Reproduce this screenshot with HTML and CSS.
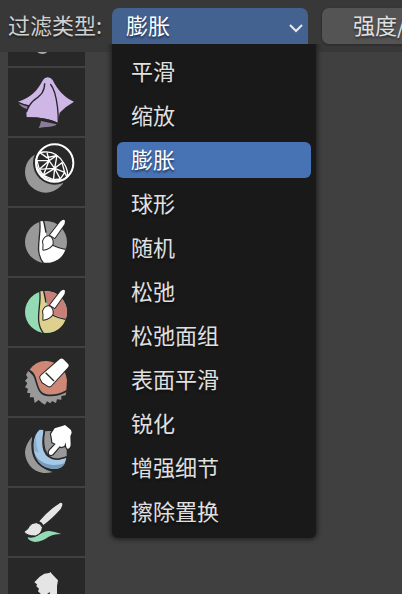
FILE: index.html
```html
<!DOCTYPE html>
<html lang="zh-CN">
<head>
<meta charset="utf-8">
<meta name="viewport" content="width=device-width, initial-scale=1">
<title>过滤类型</title>
<link rel="stylesheet" href="styles.css">
</head>
<body>
<header class="topbar">
  <label class="topbar-label" for="filter-type">过滤类型:</label>
  <div class="dropdown">
    <select class="dropdown-select" id="filter-type">
      <option>平滑</option>
      <option>缩放</option>
      <option selected>膨胀</option>
      <option>球形</option>
      <option>随机</option>
      <option>松弛</option>
      <option>松弛面组</option>
      <option>表面平滑</option>
      <option>锐化</option>
      <option>增强细节</option>
      <option>擦除置换</option>
    </select>
    <svg class="dropdown-arrow" viewBox="0 0 14 10" aria-hidden="true"><path d="M1 2 L7 8 L13 2"/></svg>
    <ul class="menu">
      <li><button class="menu-item" type="button">平滑</button></li>
      <li><button class="menu-item" type="button">缩放</button></li>
      <li><button class="menu-item is-active" type="button">膨胀</button></li>
      <li><button class="menu-item" type="button">球形</button></li>
      <li><button class="menu-item" type="button">随机</button></li>
      <li><button class="menu-item" type="button">松弛</button></li>
      <li><button class="menu-item" type="button">松弛面组</button></li>
      <li><button class="menu-item" type="button">表面平滑</button></li>
      <li><button class="menu-item" type="button">锐化</button></li>
      <li><button class="menu-item" type="button">增强细节</button></li>
      <li><button class="menu-item" type="button">擦除置换</button></li>
    </ul>
  </div>
  <button class="strength" type="button">强度/</button>
</header>
<main class="viewport">
  <nav class="tools">
    <button class="tool" type="button">
      <svg viewBox="24 -6 231 204" aria-hidden="true"><path fill="#aaa" d="M110 150l32-1-2 8q-4 5-12 5-10 0-18-7z"/></svg>
    </button>
    <button class="tool" type="button">
      <svg viewBox="24 24 231 204" aria-hidden="true">
        <path fill="#8b7c9a" d="M54 128l29 11-2 8q-15-3-27-19zM123 183l47 10q-4 6-20 7-22 1-34 4 5-8 7-21z"/>
        <path fill="#ceb6e6" d="M54 125C94 112 112 92 129 60Q134 52 143 52T158 60C170 86 194 114 222 125Q200 137 179 158L173 189Q146 172 80 172L79 157L87 137Q70 133 54 125z"/>
        <path class="ink" d="M134 70C134 100 118 108 100 122Q87 134 79 157M151 72Q158 80 164 98C171 122 175 145 175 190M79 174Q140 173 174 191M54 127Q72 135 88 138"/>
      </svg>
    </button>
    <button class="tool" type="button">
      <svg viewBox="24 9 231 204" aria-hidden="true">
        <circle cx="137" cy="111" r="62" fill="#999"/>
        <circle cx="164" cy="84" r="65" fill="#282828"/>
        <g class="mesh">
          <path d="M108 77Q111 50 132 51 171 47 193 87 206 107 201 127 175 147 141 130 108 112 108 77z"/>
          <path d="M111 77l36 0 17 23-46 3 29-26 24-16-30 7-20-14M147 77l-6-25M147 77l-17 44M164 100l-4 38M164 100l22-17 8 29zM171 61l-7 39M118 103l-7-26M118 103l12 18 34-21 17 32 13-20 7 15M130 121l30 13 21-2"/>
        </g>
        <circle cx="164" cy="84" r="56" fill="none" stroke="#fff" stroke-width="6"/>
      </svg>
    </button>
    <button class="tool" type="button">
      <svg viewBox="24 9 231 204" aria-hidden="true">
        <circle cx="138" cy="111" r="63" fill="#999"/>
        <path fill="#fff" d="M118 49L131 49C137 76 137 105 158 118Q170 128 196 132C188 163 157 178 128 171C99 135 126 100 118 49z"/>
        <path class="ink" d="M119 48C126 90 101 138 130 174M131 48Q135 66 138 83M157 120Q172 128 197 133"/>
        <g class="brush">
          <path d="M182 49Q190 41 195 47 196 56 188 65L164 99 150 90z"/>
          <path d="M130 134Q132 121 129 109 134 94 146 94 160 99 158 117 151 131 130 134z"/>
        </g>
      </svg>
    </button>
    <button class="tool" type="button">
      <svg viewBox="24 9 231 204" aria-hidden="true">
        <circle cx="138" cy="111" r="63" fill="#94dab5"/>
        <path fill="#c87f77" d="M131 49A63 63 0 0 1 197 133L150 115z"/>
        <path fill="#dfd08f" d="M118 49L131 49C137 76 137 105 158 118Q170 128 196 132C188 163 157 178 128 171C99 135 126 100 118 49z"/>
        <path class="ink" d="M119 48C126 90 101 138 130 174M131 48Q135 66 138 83M157 120Q172 128 197 133"/>
        <g class="brush">
          <path d="M182 49Q190 41 195 47 196 56 188 65L164 99 150 90z"/>
          <path d="M130 134Q132 121 129 109 134 94 146 94 160 99 158 117 151 131 130 134z"/>
        </g>
      </svg>
    </button>
    <button class="tool" type="button">
      <svg viewBox="24 9 231 204" aria-hidden="true">
        <path fill="#999" d="M85 77L78 89 83 98 75 107 82 115 75 127 84 131 81 143 91 145 89 157 101 157 104 174 116 165 125 173 135 179 141 169 151 175 156 168 168 174 171 163 184 164 184 153 197 151 199 140 150 145z"/>
        <path fill="#cf8876" d="M88 75Q108 46 141 48 194 54 201 106L199 136Q173 151 143 149 120 143 112 112 104 85 88 75z"/>
        <path class="ink ink-wide" d="M84 75C118 83 100 150 144 151Q174 153 199 139"/>
        <g class="brush">
          <path d="M121 100Q119 95 124 91L180 42Q185 38 190 43L205 58Q208 62 204 67L153 122Q148 126 143 122L127 112z"/>
          <path class="ink" d="M137 83L162 108"/>
        </g>
      </svg>
    </button>
    <button class="tool" type="button">
      <svg viewBox="24 9 231 204" aria-hidden="true">
        <path fill="#999" d="M97 65C87 118 104 155 158 171 111 185 76 151 75 111 77 83 97 65 97 65z"/>
        <path fill="#999" d="M135 49Q184 41 200 91L200 124Q175 137 153 126 126 108 135 49z"/>
        <path fill="#a4c8e5" d="M119 44L130 45Q132 58 129 75C127 112 148 139 180 133L199 128Q196 151 177 160C133 170 96 140 101 85Q103 57 119 44z"/>
        <path fill="#769bbd" d="M101 107Q113 146 159 150 181 151 196 143 186 164 155 162 108 153 101 107z"/>
        <path fill="#769bbd" opacity=".55" d="M102 83L108 62Q107 86 116 113L101 107z"/>
        <path class="ink" d="M133 48Q125 84 132 106 144 136 177 132L200 126M99 63Q91 112 114 143 132 162 159 165"/>
        <path class="hand" d="M153 57L164 40 187 33 195 30 213 45 215 53 211 64 212 90Q210 101 203 101 198 101 197 82L193 93 184 96 179 94 158 118Q152 122 147 117 145 111 149 106L167 87 157 82 156 72z"/>
      </svg>
    </button>
    <button class="tool" type="button">
      <svg viewBox="24 9 231 204" aria-hidden="true">
        <path fill="#94dab5" d="M83 157Q98 161 112 152 134 137 148 138 163 139 184 147 159 147 145 156 127 169 105 171 85 168 83 157z"/>
        <path fill="#e5e5e5" stroke="#282828" stroke-width="3" d="M72 140Q85 133 88 124 94 113 109 113 123 115 127 127 126 146 106 153 80 153 72 140z"/>
        <path fill="#e5e5e5" d="M118 109Q144 77 177 56 183 51 187 56 188 62 182 72 154 103 130 120 127 113 118 109z"/>
      </svg>
    </button>
    <button class="tool" type="button">
      <svg viewBox="24 219 231 204" aria-hidden="true"><path fill="#e5e5e5" d="M103 292L119 275 133 266 148 264 151 261 156 267 174 286 171 303 171 345 151 345 149 321 139 329 128 345 119 345 122 326 114 319 117 311 109 304 111 298z"/></svg>
    </button>
  </nav>
</main>
</body>
</html>
```
FILE: styles.css
```css
* {
  box-sizing: border-box;
}

body {
  display: flex;
  flex-direction: column;
  height: 100vh;
  margin: 0;
  overflow: hidden;
  background: #404040;
  color: #e0e0e0;
  font: 22px/32px "Noto Sans CJK SC", "Noto Sans", sans-serif;
}

button,
select {
  margin: 0;
  border: 0;
  color: inherit;
  font: inherit;
}

.topbar {
  position: relative;
  z-index: 1;
  display: flex;
  flex: none;
  align-items: flex-start;
  padding: 8px 0 8px 8px;
  background: #383838;
  white-space: nowrap;
}

.topbar-label {
  flex: none;
  width: 104px;
  color: #d0d0d0;
  text-shadow: 0 2px 2px #202020;
}

.dropdown {
  position: relative;
  flex: none;
  width: 196px;
}

.dropdown-select {
  display: block;
  width: 100%;
  height: 36px;
  padding: 0 14px 4px;
  border-radius: 7px 7px 0 0;
  background: #446290;
  color: #fff;
  text-shadow: 0 2px 2px #203050;
  appearance: none;
}

.dropdown-arrow {
  position: absolute;
  top: 15px;
  right: 5px;
  width: 14px;
  height: 10px;
  fill: none;
  stroke: #e8e8e8;
  stroke-width: 2;
  pointer-events: none;
}

.menu {
  position: absolute;
  top: 100%;
  left: 0;
  display: grid;
  gap: 8px;
  width: 204px;
  margin: 0;
  padding: 10px 5px 8px;
  border-radius: 0 0 6px 6px;
  background: #191919;
  box-shadow: 0 0 4px 2px #242424;
  list-style: none;
  clip-path: inset(0 -8px -8px -8px);
}

.menu-item {
  display: block;
  width: 100%;
  height: 36px;
  padding: 0 14px 4px;
  border-radius: 6px;
  background: none;
  text-align: left;
  text-shadow: 0 2px 2px #101010;
}

.menu-item.is-active {
  background: #4772b3;
  color: #fff;
  text-shadow: 0 2px 2px #203860;
}

.strength {
  flex: 1;
  min-width: 0;
  height: 36px;
  margin-left: 14px;
  padding: 0 0 4px 31px;
  overflow: hidden;
  border-radius: 7px 0 0 7px;
  background: #545454;
  box-shadow: 0 1px 1px 1px #303030;
  text-align: left;
  text-shadow: 0 2px 2px #303030;
}

.viewport {
  flex: 1;
  min-height: 0;
  padding-left: 8px;
  overflow: hidden;
}

.tools {
  display: grid;
  grid-auto-rows: 68px;
  gap: 2px;
  width: 77px;
  margin-top: -54px;
}

.tool {
  padding: 0;
  background: #282828;
}

.tool svg {
  display: block;
  width: 100%;
  height: 100%;
}

.ink {
  fill: none;
  stroke: #282828;
  stroke-width: 4;
}

.ink-wide {
  stroke-width: 5;
}

.mesh {
  fill: none;
  stroke: #fff;
  stroke-width: 4;
}

.brush {
  fill: #fff;
  stroke: #282828;
  stroke-width: 6;
  stroke-linejoin: round;
  paint-order: stroke;
}

.hand {
  fill: #fff;
  stroke: #282828;
  stroke-width: 7;
  paint-order: stroke;
}
```
